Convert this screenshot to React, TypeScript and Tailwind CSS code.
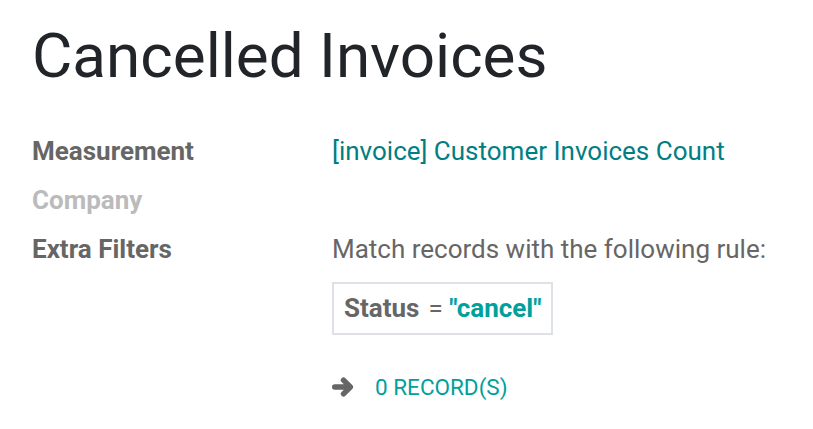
export default function App() {
  return (
    <div className="min-h-screen w-full bg-white px-8 pt-[18px] font-['Roboto',sans-serif]">
      <h1 className="text-[62px] leading-[76px] font-normal text-[#212529]">Cancelled Invoices</h1>

      <div className="mt-[33px] flex flex-col text-[26px] leading-[49px]">
        <div className="flex">
          <div className="w-[300px] font-bold text-[#666666]">Measurement</div>
          <div className="text-[#017e84]">[invoice] Customer Invoices Count</div>
        </div>
        <div className="flex">
          <div className="w-[300px] font-bold text-[#bbbbbb]">Company</div>
          <div />
        </div>
        <div className="flex">
          <div className="w-[300px] font-bold text-[#666666]">Extra Filters</div>
          <div className="flex flex-col">
            <div className="text-[#666666]">Match records with the following rule:</div>
            <div className="mt-[8px] flex">
              <div className="flex items-center gap-[9px] border-2 border-[#dee2e6] px-[10px] leading-[49px]">
                <span className="font-bold text-[#666666]">Status</span>
                <span className="text-[#666666]">
                  = <span className="font-bold text-[#00a09d]">"cancel"</span>
                </span>
              </div>
            </div>
            <div className="mt-[37px] flex items-center gap-[21px] leading-[30px]">
              <svg width="22" height="20" viewBox="0 0 21 19" className="text-[#666666]">
                <path
                  d="M2.6 9.5H17.4M11 3l6.5 6.5L11 16"
                  fill="none"
                  stroke="currentColor"
                  strokeWidth="5.2"
                  strokeLinecap="round"
                  strokeLinejoin="round"
                />
              </svg>
              <span className="text-[22.5px] text-[#00a09d]">0 RECORD(S)</span>
            </div>
          </div>
        </div>
      </div>
    </div>
  );
}
